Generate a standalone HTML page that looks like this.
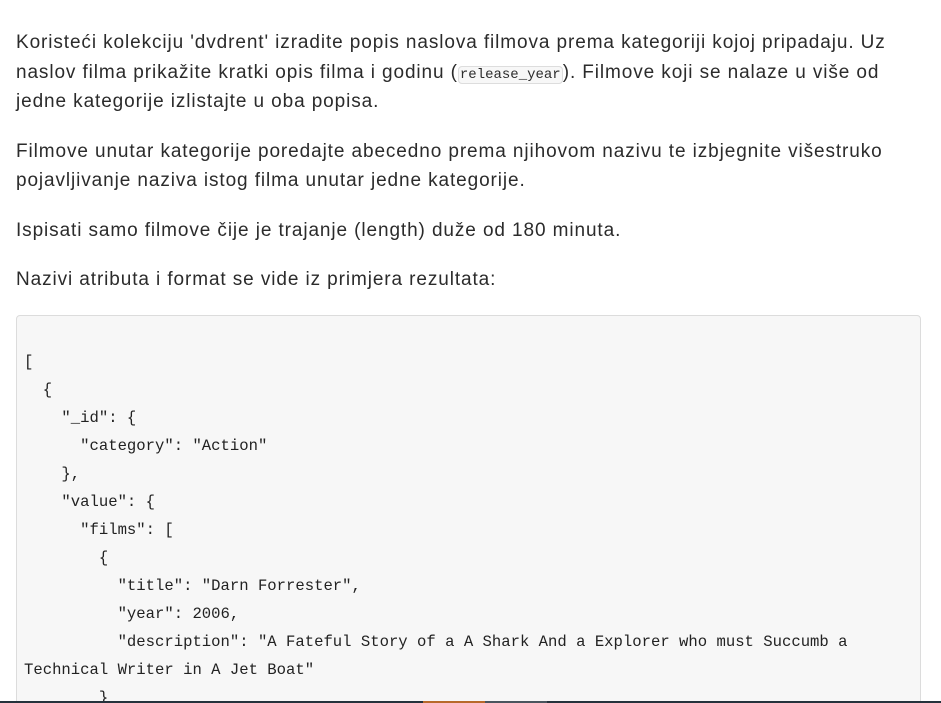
<!DOCTYPE html>
<html><head><meta charset="utf-8"><style>
html,body{margin:0;padding:0;background:#fff;width:941px;height:703px;overflow:hidden;position:relative}
.wrap{padding:28px 16px 0 16px;font-family:"Liberation Sans",sans-serif;font-size:19px;line-height:29.5px;color:#2b2b2b}
p{margin:0 0 20px 0;letter-spacing:0.9px;white-space:nowrap}
code{font-family:"Liberation Mono",monospace;font-size:14px;line-height:1;letter-spacing:0;background:#f7f7f7;border:1px solid #ddd;border-radius:4px;padding:0 1px}
pre{margin:0;background:#f7f7f7;border:1px solid #dcdcdc;border-radius:4px;padding:4px 7px 0 7px;font-family:"Liberation Mono",monospace;font-size:15.6px;line-height:28px;color:#222;height:400px;overflow:hidden;white-space:pre;width:889px}
.bar{position:absolute;left:0;right:0;bottom:0;height:2px;background:#25323c}
.bar i{position:absolute;top:0;height:2px}
</style></head><body>
<div class="wrap">
<p>Koristeći kolekciju 'dvdrent' izradite popis naslova filmova prema kategoriji kojoj pripadaju. Uz<br>naslov filma prikažite kratki opis filma i godinu (<code>release_year</code>). Filmove koji se nalaze u više od<br>jedne kategorije izlistajte u oba popisa.</p>
<p>Filmove unutar kategorije poredajte abecedno prema njihovom nazivu te izbjegnite višestruko<br>pojavljivanje naziva istog filma unutar jedne kategorije.</p>
<p>Ispisati samo filmove čije je trajanje (length) duže od 180 minuta.</p>
<p>Nazivi atributa i format se vide iz primjera rezultata:</p>
<pre>&#32;
[
  {
    "_id": {
      "category": "Action"
    },
    "value": {
      "films": [
        {
          "title": "Darn Forrester",
          "year": 2006,
          "description": "A Fateful Story of a A Shark And a Explorer who must Succumb a
Technical Writer in A Jet Boat"
        }
</pre>
</div>
<div class="bar"><i style="left:423px;width:62px;background:#b8692a"></i><i style="left:485px;width:62px;background:#4a555e"></i></div>
</body></html>
